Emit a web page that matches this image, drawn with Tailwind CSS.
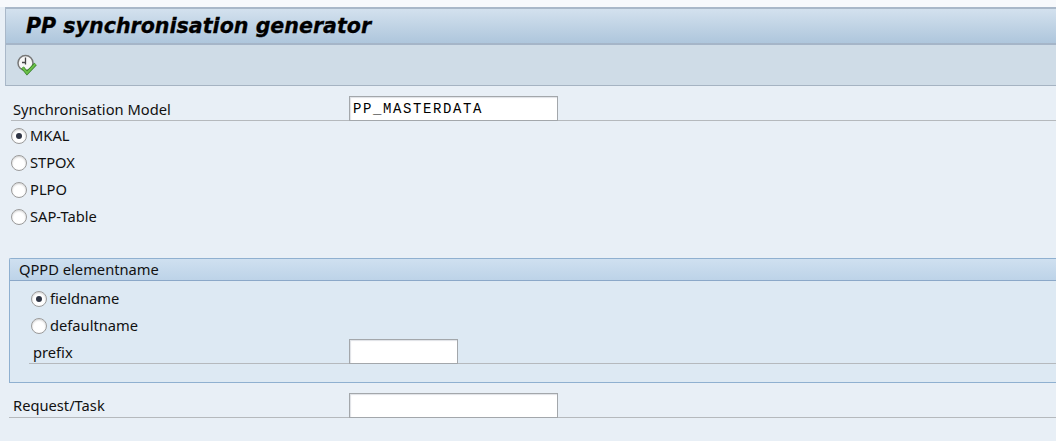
<!DOCTYPE html>
<html lang="en">
<head>
  <meta charset="UTF-8" />
  <title>PP synchronisation generator</title>
  <script src="https://cdn.jsdelivr.net/npm/@tailwindcss/browser@4"></script>
</head>
<body class="w-[1056px] h-[441px] overflow-hidden bg-[#e8eff6] text-[#111] font-['Noto_Sans',sans-serif] text-[14.7px]">
  <div class="h-[7px] bg-[#f7f9fc]"></div>

  <!-- title + toolbar -->
  <header class="ml-[5px] border-l border-[#a9b8c9]">
    <div class="h-[38px] pl-[20px] flex items-center bg-gradient-to-b from-[#d3e1ee] to-[#aec6dc] border-t-2 border-b-2 border-t-[#a9b8c9] border-b-[#a5b5c8]">
      <h1 class="font-['DejaVu_Sans',sans-serif] font-bold italic text-[20.6px] text-black [-webkit-text-stroke:0.3px_black]">PP synchronisation generator</h1>
    </div>
    <div class="h-[41px] pl-[10px] flex items-center bg-[#cfdce7] border-b border-[#a5b3c2]">
      <svg width="22" height="22" viewBox="0 0 22 22">
        <circle cx="9.5" cy="9" r="7.5" fill="#f7f7f7" stroke="#777" stroke-width="1.5"/>
        <path d="M9.5 3.5v7M6 8.5h3.5" fill="none" stroke="#444" stroke-width="1.3"/>
        <path d="M6.5 13.5l4.5 5.5L19.5 10" fill="none" stroke="#2f7a22" stroke-width="3.4"/>
        <path d="M6.5 13.5l4.5 5.5L19.5 10" fill="none" stroke="#6cc04a" stroke-width="2"/>
      </svg>
    </div>
  </header>

  <main class="pt-[9px]">
    <!-- model row -->
    <div class="ml-[11px] h-[26px] flex items-end border-b border-[#b5b9bd]">
      <label class="w-[338px] pl-[2px] pb-[1px] leading-[20px]">Synchronisation Model</label>
      <div class="w-[209px] h-[25px] -mb-px bg-white border border-[#a3a7ab] pl-[3px] pt-[1px] flex items-center font-['Liberation_Mono',monospace] text-[14px] tracking-[1.6px] text-black shadow-[inset_1px_1px_1px_#dfe2e6]">PP_MASTERDATA</div>
    </div>

    <!-- radios -->
    <div class="ml-[11px] pt-[1px] flex flex-col">
      <label class="h-[27px] flex items-center gap-[3px]">
        <span class="w-[16px] h-[16px] rounded-full border border-[#9a9a9a] bg-white shadow-[inset_0_1px_2px_#cfcfcf] flex items-center justify-center"><span class="w-[6px] h-[6px] rounded-full bg-[#2f3545]"></span></span>MKAL
      </label>
      <label class="h-[27px] flex items-center gap-[3px]">
        <span class="w-[16px] h-[16px] rounded-full border border-[#9a9a9a] bg-white shadow-[inset_0_1px_2px_#cfcfcf]"></span>STPOX
      </label>
      <label class="h-[27px] flex items-center gap-[3px]">
        <span class="w-[16px] h-[16px] rounded-full border border-[#9a9a9a] bg-white shadow-[inset_0_1px_2px_#cfcfcf]"></span>PLPO
      </label>
      <label class="h-[27px] flex items-center gap-[3px]">
        <span class="w-[16px] h-[16px] rounded-full border border-[#9a9a9a] bg-white shadow-[inset_0_1px_2px_#cfcfcf]"></span>SAP-Table
      </label>
    </div>

    <!-- group box -->
    <section class="mt-[28px] ml-[9px] h-[125px] bg-[#dde9f3] border-t border-l border-b border-[#8fb0d0] rounded-tl-[2px]">
      <div class="h-[22px] pl-[9px] pb-[1px] flex items-center bg-gradient-to-b from-[#cfe0f0] to-[#bdd3e8] border-b border-[#8ba8c8]">QPPD elementname</div>
      <div class="pl-[21px] pt-[4px] flex flex-col">
        <label class="h-[27px] flex items-center gap-[3px]">
          <span class="w-[16px] h-[16px] rounded-full border border-[#9a9a9a] bg-white shadow-[inset_0_1px_2px_#cfcfcf] flex items-center justify-center"><span class="w-[6px] h-[6px] rounded-full bg-[#2f3545]"></span></span>fieldname
        </label>
        <label class="h-[27px] flex items-center gap-[3px]">
          <span class="w-[16px] h-[16px] rounded-full border border-[#9a9a9a] bg-white shadow-[inset_0_1px_2px_#cfcfcf]"></span>defaultname
        </label>
        <div class="-ml-[2px] h-[25px] flex items-end border-b border-[#b5b9bd]">
          <label class="w-[320px] pl-[4px] leading-[20px] pb-[1px]">prefix</label>
          <div class="w-[109px] h-[25px] -mb-px bg-white border border-[#a3a7ab] shadow-[inset_1px_1px_1px_#dfe2e6]"></div>
        </div>
      </div>
    </section>

    <!-- request row -->
    <div class="mt-[10px] ml-[9px] h-[25px] flex items-end border-b border-[#b5b9bd]">
      <label class="w-[340px] pl-[4px] leading-[20px] pb-[2px]">Request/Task</label>
      <div class="w-[209px] h-[25px] -mb-px bg-white border border-[#a3a7ab] shadow-[inset_1px_1px_1px_#dfe2e6]"></div>
    </div>
  </main>
</body>
</html>
